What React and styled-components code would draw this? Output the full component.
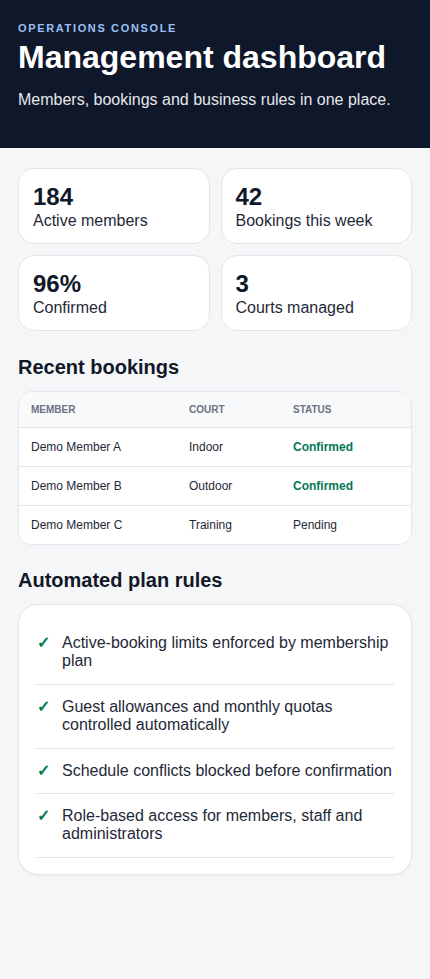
import React from "react";
import styled, { createGlobalStyle } from "styled-components";

const Global = createGlobalStyle`
  * { box-sizing: border-box; }
  html, body { margin: 0; padding: 0; background: #f5f6f8; }
  body { font-family: "Liberation Sans", Arial, sans-serif; color: #111827; }
`;

const Page = styled.div`
  min-height: 979px;
  background: #f5f6f8;
`;

const Hero = styled.header`
  background: #0f172a;
  color: #ffffff;
  padding: 22px 18px 36px;
  height: 148px;
`;

const Eyebrow = styled.div`
  font-size: 11px;
  line-height: 13px;
  font-weight: 700;
  letter-spacing: 0.15em;
  text-transform: uppercase;
  color: #9cc0f5;
`;

const Title = styled.h1`
  margin: 5px 0 0;
  font-size: 32px;
  line-height: 35px;
  font-weight: 700;
  color: #ffffff;
`;

const Subtitle = styled.p`
  margin: 13px 0 0;
  font-size: 16px;
  line-height: 24px;
  color: #e5e7eb;
`;

const Main = styled.main`
  padding: 20px 18px 40px;
`;

const StatGrid = styled.div`
  display: grid;
  grid-template-columns: 1fr 1fr;
  gap: 11px 11px;
`;

const StatCard = styled.div`
  background: #ffffff;
  border: 1px solid #e2e5ea;
  border-radius: 16px;
  padding: 14px 14px 12px;
  height: 76px;
`;

const StatValue = styled.div`
  font-size: 24px;
  line-height: 28px;
  font-weight: 700;
  color: #111827;
`;

const StatLabel = styled.div`
  font-size: 16px;
  line-height: 19px;
  color: #1f2937;
`;

const SectionTitle = styled.h2`
  margin: ${(p) => p.$top || 24}px 0 12px;
  font-size: 20px;
  line-height: 24px;
  font-weight: 700;
  color: #111827;
`;

const TableCard = styled.div`
  background: #ffffff;
  border: 1px solid #e2e5ea;
  border-radius: 14px;
  overflow: hidden;
`;

const Row = styled.div`
  display: grid;
  grid-template-columns: 158px 104px 1fr;
  align-items: center;
  height: ${(p) => (p.$head ? "36px" : p.$last ? "38px" : "39px")};
  background: ${(p) => (p.$head ? "#f8f9fb" : "#ffffff")};
  border-bottom: ${(p) => (p.$last ? "none" : "1px solid #e2e5ea")};
`;

const HeadCell = styled.div`
  padding-left: 12px;
  font-size: 10px;
  font-weight: 700;
  text-transform: uppercase;
  color: #6b7280;
`;

const Cell = styled.div`
  padding-left: 12px;
  font-size: 12px;
  color: ${(p) => (p.$ok ? "#047857" : "#1f2937")};
  font-weight: ${(p) => (p.$ok ? 700 : 400)};
`;

const RulesCard = styled.div`
  background: #ffffff;
  border: 1px solid #e2e5ea;
  border-radius: 20px;
  padding: 16px 17px;
  box-shadow: 0 1px 3px rgba(15, 23, 42, 0.04);
`;

const RuleList = styled.ul`
  list-style: none;
  margin: 0;
  padding: 0;
`;

const Rule = styled.li`
  display: flex;
  align-items: flex-start;
  padding: 13px 0;
  border-bottom: 1px solid #e2e5ea;
  font-size: 16px;
  line-height: 18.4px;
  color: #1f2937;
`;

const Check = styled.span`
  flex: 0 0 26px;
  padding-left: 1px;
  color: #047857;
  font-weight: 700;
  font-size: 16px;
  line-height: 18.4px;
`;

const stats = [
  ["184", "Active members"],
  ["42", "Bookings this week"],
  ["96%", "Confirmed"],
  ["3", "Courts managed"],
];

const bookings = [
  ["Demo Member A", "Indoor", "Confirmed", true],
  ["Demo Member B", "Outdoor", "Confirmed", true],
  ["Demo Member C", "Training", "Pending", false],
];

const rules = [
  "Active-booking limits enforced by membership plan",
  "Guest allowances and monthly quotas controlled automatically",
  "Schedule conflicts blocked before confirmation",
  "Role-based access for members, staff and administrators",
];

export default function App() {
  return (
    <Page>
      <Global />
      <Hero>
        <Eyebrow>Operations console</Eyebrow>
        <Title>Management dashboard</Title>
        <Subtitle>Members, bookings and business rules in one place.</Subtitle>
      </Hero>
      <Main>
        <StatGrid>
          {stats.map(([v, l]) => (
            <StatCard key={l}>
              <StatValue>{v}</StatValue>
              <StatLabel>{l}</StatLabel>
            </StatCard>
          ))}
        </StatGrid>

        <SectionTitle>Recent bookings</SectionTitle>
        <TableCard>
          <Row $head>
            <HeadCell>Member</HeadCell>
            <HeadCell>Court</HeadCell>
            <HeadCell>Status</HeadCell>
          </Row>
          {bookings.map(([m, c, s, ok], i) => (
            <Row key={m} $last={i === bookings.length - 1}>
              <Cell>{m}</Cell>
              <Cell>{c}</Cell>
              <Cell $ok={ok}>{s}</Cell>
            </Row>
          ))}
        </TableCard>

        <SectionTitle $top={23}>Automated plan rules</SectionTitle>
        <RulesCard>
          <RuleList>
            {rules.map((r) => (
              <Rule key={r}>
                <Check>✓</Check>
                <span>{r}</span>
              </Rule>
            ))}
          </RuleList>
        </RulesCard>
      </Main>
    </Page>
  );
}
